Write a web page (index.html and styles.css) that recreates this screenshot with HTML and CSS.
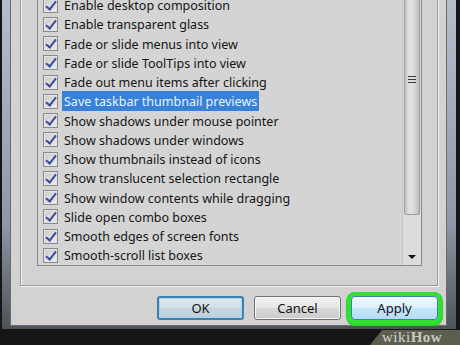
FILE: index.html
```html
<!DOCTYPE html>
<html lang="en">
<head>
    <meta charset="UTF-8">
    <meta name="viewport" content="width=device-width, initial-scale=1.0">
    <title>Performance Options</title>
    <link rel="stylesheet" href="styles.css">
</head>
<body>
    <div class="screen">
        <div class="frame">
            <div class="dialog">
                <div class="group">
                    <div class="listbox">
                        <ul class="options">
                            <li><span class="check"></span><span class="label">Enable desktop composition</span></li>
                            <li><span class="check"></span><span class="label">Enable transparent glass</span></li>
                            <li><span class="check"></span><span class="label">Fade or slide menus into view</span></li>
                            <li><span class="check"></span><span class="label">Fade or slide ToolTips into view</span></li>
                            <li><span class="check"></span><span class="label">Fade out menu items after clicking</span></li>
                            <li class="selected"><span class="check"></span><span class="label">Save taskbar thumbnail previews</span></li>
                            <li><span class="check"></span><span class="label">Show shadows under mouse pointer</span></li>
                            <li><span class="check"></span><span class="label">Show shadows under windows</span></li>
                            <li><span class="check"></span><span class="label">Show thumbnails instead of icons</span></li>
                            <li><span class="check"></span><span class="label">Show translucent selection rectangle</span></li>
                            <li><span class="check"></span><span class="label">Show window contents while dragging</span></li>
                            <li><span class="check"></span><span class="label">Slide open combo boxes</span></li>
                            <li><span class="check"></span><span class="label">Smooth edges of screen fonts</span></li>
                            <li><span class="check"></span><span class="label">Smooth-scroll list boxes</span></li>
                        </ul>
                        <div class="scrollbar">
                            <div class="thumb"><span class="grip"></span></div>
                            <div class="track"></div>
                            <div class="arrow"></div>
                        </div>
                    </div>
                </div>
                <div class="buttons">
                    <button class="btn default">OK</button>
                    <button class="btn">Cancel</button>
                    <button class="btn hot">Apply</button>
                </div>
            </div>
        </div>
        <div class="watermark"><span class="wiki">wiki</span>How</div>
    </div>
</body>
</html>
```

FILE: styles.css
```css
body {
    margin: 0;
    background: #141414;
    font-family: "Noto Sans", "Open Sans", sans-serif;
}

.screen {
    position: relative;
    width: 460px;
    height: 345px;
    overflow: hidden;
    background: #161616;
}

.frame {
    margin: -25.5px 4px 0 2px;
    padding: 0 9px 3px 8px;
    background: linear-gradient(#b7c4d0, #8d99a6 70%, #4c5259);
}

.dialog {
    background: #d2d2d2;
    border: 1px solid #6c6c6c;
    border-top: none;
    padding: 0 8px 5px 9px;
}

.group {
    border: 1px solid #9a9a9a;
    box-shadow: inset 1px 1px 0 #f4f4f4, 1px 1px 0 #f4f4f4;
    padding: 19px 15px 19px 16px;
}

.listbox {
    display: flex;
    border: 1px solid #85888e;
    background: #d4d4d4;
}

.options {
    flex: 1;
    list-style: none;
    margin: 0;
    padding: 0;
}

.options li {
    display: flex;
    align-items: center;
    height: 19.25px;
    padding-left: 5px;
    font-size: 12.5px;
    color: #151515;
}

.check {
    position: relative;
    width: 13px;
    height: 13px;
    border: 1px solid #8a8a8a;
    background: linear-gradient(135deg, #cbcbcb, #ededed);
    box-shadow: inset 0 0 0 1px #e4e4e4;
    flex-shrink: 0;
}

.check::after {
    content: "";
    position: absolute;
    left: 4px;
    top: 0;
    width: 4px;
    height: 9px;
    border: solid #3a4c9c;
    border-width: 0 2px 2px 0;
    transform: rotate(38deg);
}

.label {
    margin-left: 4px;
    padding: 2px 2px 1px;
    white-space: nowrap;
}

.selected .label {
    background: #3781d6;
    color: #eaf2ff;
}

.scrollbar {
    width: 18px;
    border-left: 1px solid #c2c2c2;
    background: #dcdcdc;
    display: flex;
    flex-direction: column;
}

.thumb {
    height: 218.5px;
    margin: 0 1px;
    border: 1px solid #9c9c9c;
    border-top: none;
    border-radius: 0 0 3px 3px;
    background: linear-gradient(90deg, #c4c4c4, #e4e4e4 35%, #d6d6d6 70%, #bdbdbd);
    display: flex;
    align-items: center;
    justify-content: center;
}

.grip {
    width: 8px;
    height: 7px;
    background: repeating-linear-gradient(#3a3a3a 0 1px, transparent 1px 3px);
    margin-top: -50px;
}

.track {
    flex: 1;
}

.arrow {
    height: 17px;
    display: flex;
    align-items: center;
    justify-content: center;
}

.arrow::after {
    content: "";
    border-left: 4px solid transparent;
    border-right: 4px solid transparent;
    border-top: 4px solid #111;
}

.buttons {
    display: flex;
    justify-content: flex-end;
    gap: 10px;
    margin-top: 10px;
}

.btn {
    width: 87px;
    height: 24px;
    border: 1px solid #707070;
    border-radius: 3px;
    background: linear-gradient(#f0f0f0, #e6e6e6 48%, #d8d8d8 52%, #cbcbcb);
    box-shadow: inset 0 0 0 1px #f6f6f6;
    font-family: "Noto Sans", "Open Sans", sans-serif;
    font-size: 13px;
    color: #111;
    padding: 0;
}

.btn.default {
    border: 2px solid #3d80b2;
    background: linear-gradient(#dfe9ee, #d2dfe6 50%, #c6d5de 52%, #bfcfd9);
    box-shadow: inset 0 0 0 1px #a9d4ea;
}

.btn.hot {
    border: 1px solid #3c7fb1;
    background: linear-gradient(#eef8fe, #dceffc 48%, #c4e4f9 52%, #b6dcf5);
    box-shadow: 0 0 0 4px #31e031, 0 1px 0 5px #2bd62b;
    border-radius: 4px;
}

.watermark {
    position: absolute;
    right: 0;
    bottom: 0;
    width: 78px;
    height: 15px;
    padding-left: 12px;
    background: #5c5f4e;
    clip-path: polygon(12px 0, 100% 0, 100% 100%, 0 100%);
    font-family: "Liberation Serif", serif;
    font-weight: bold;
    font-size: 15px;
    line-height: 15px;
    color: #c9c9c4;
    letter-spacing: 0.5px;
}

.wiki {
    font-weight: normal;
    color: #d6d6d2;
}
```
